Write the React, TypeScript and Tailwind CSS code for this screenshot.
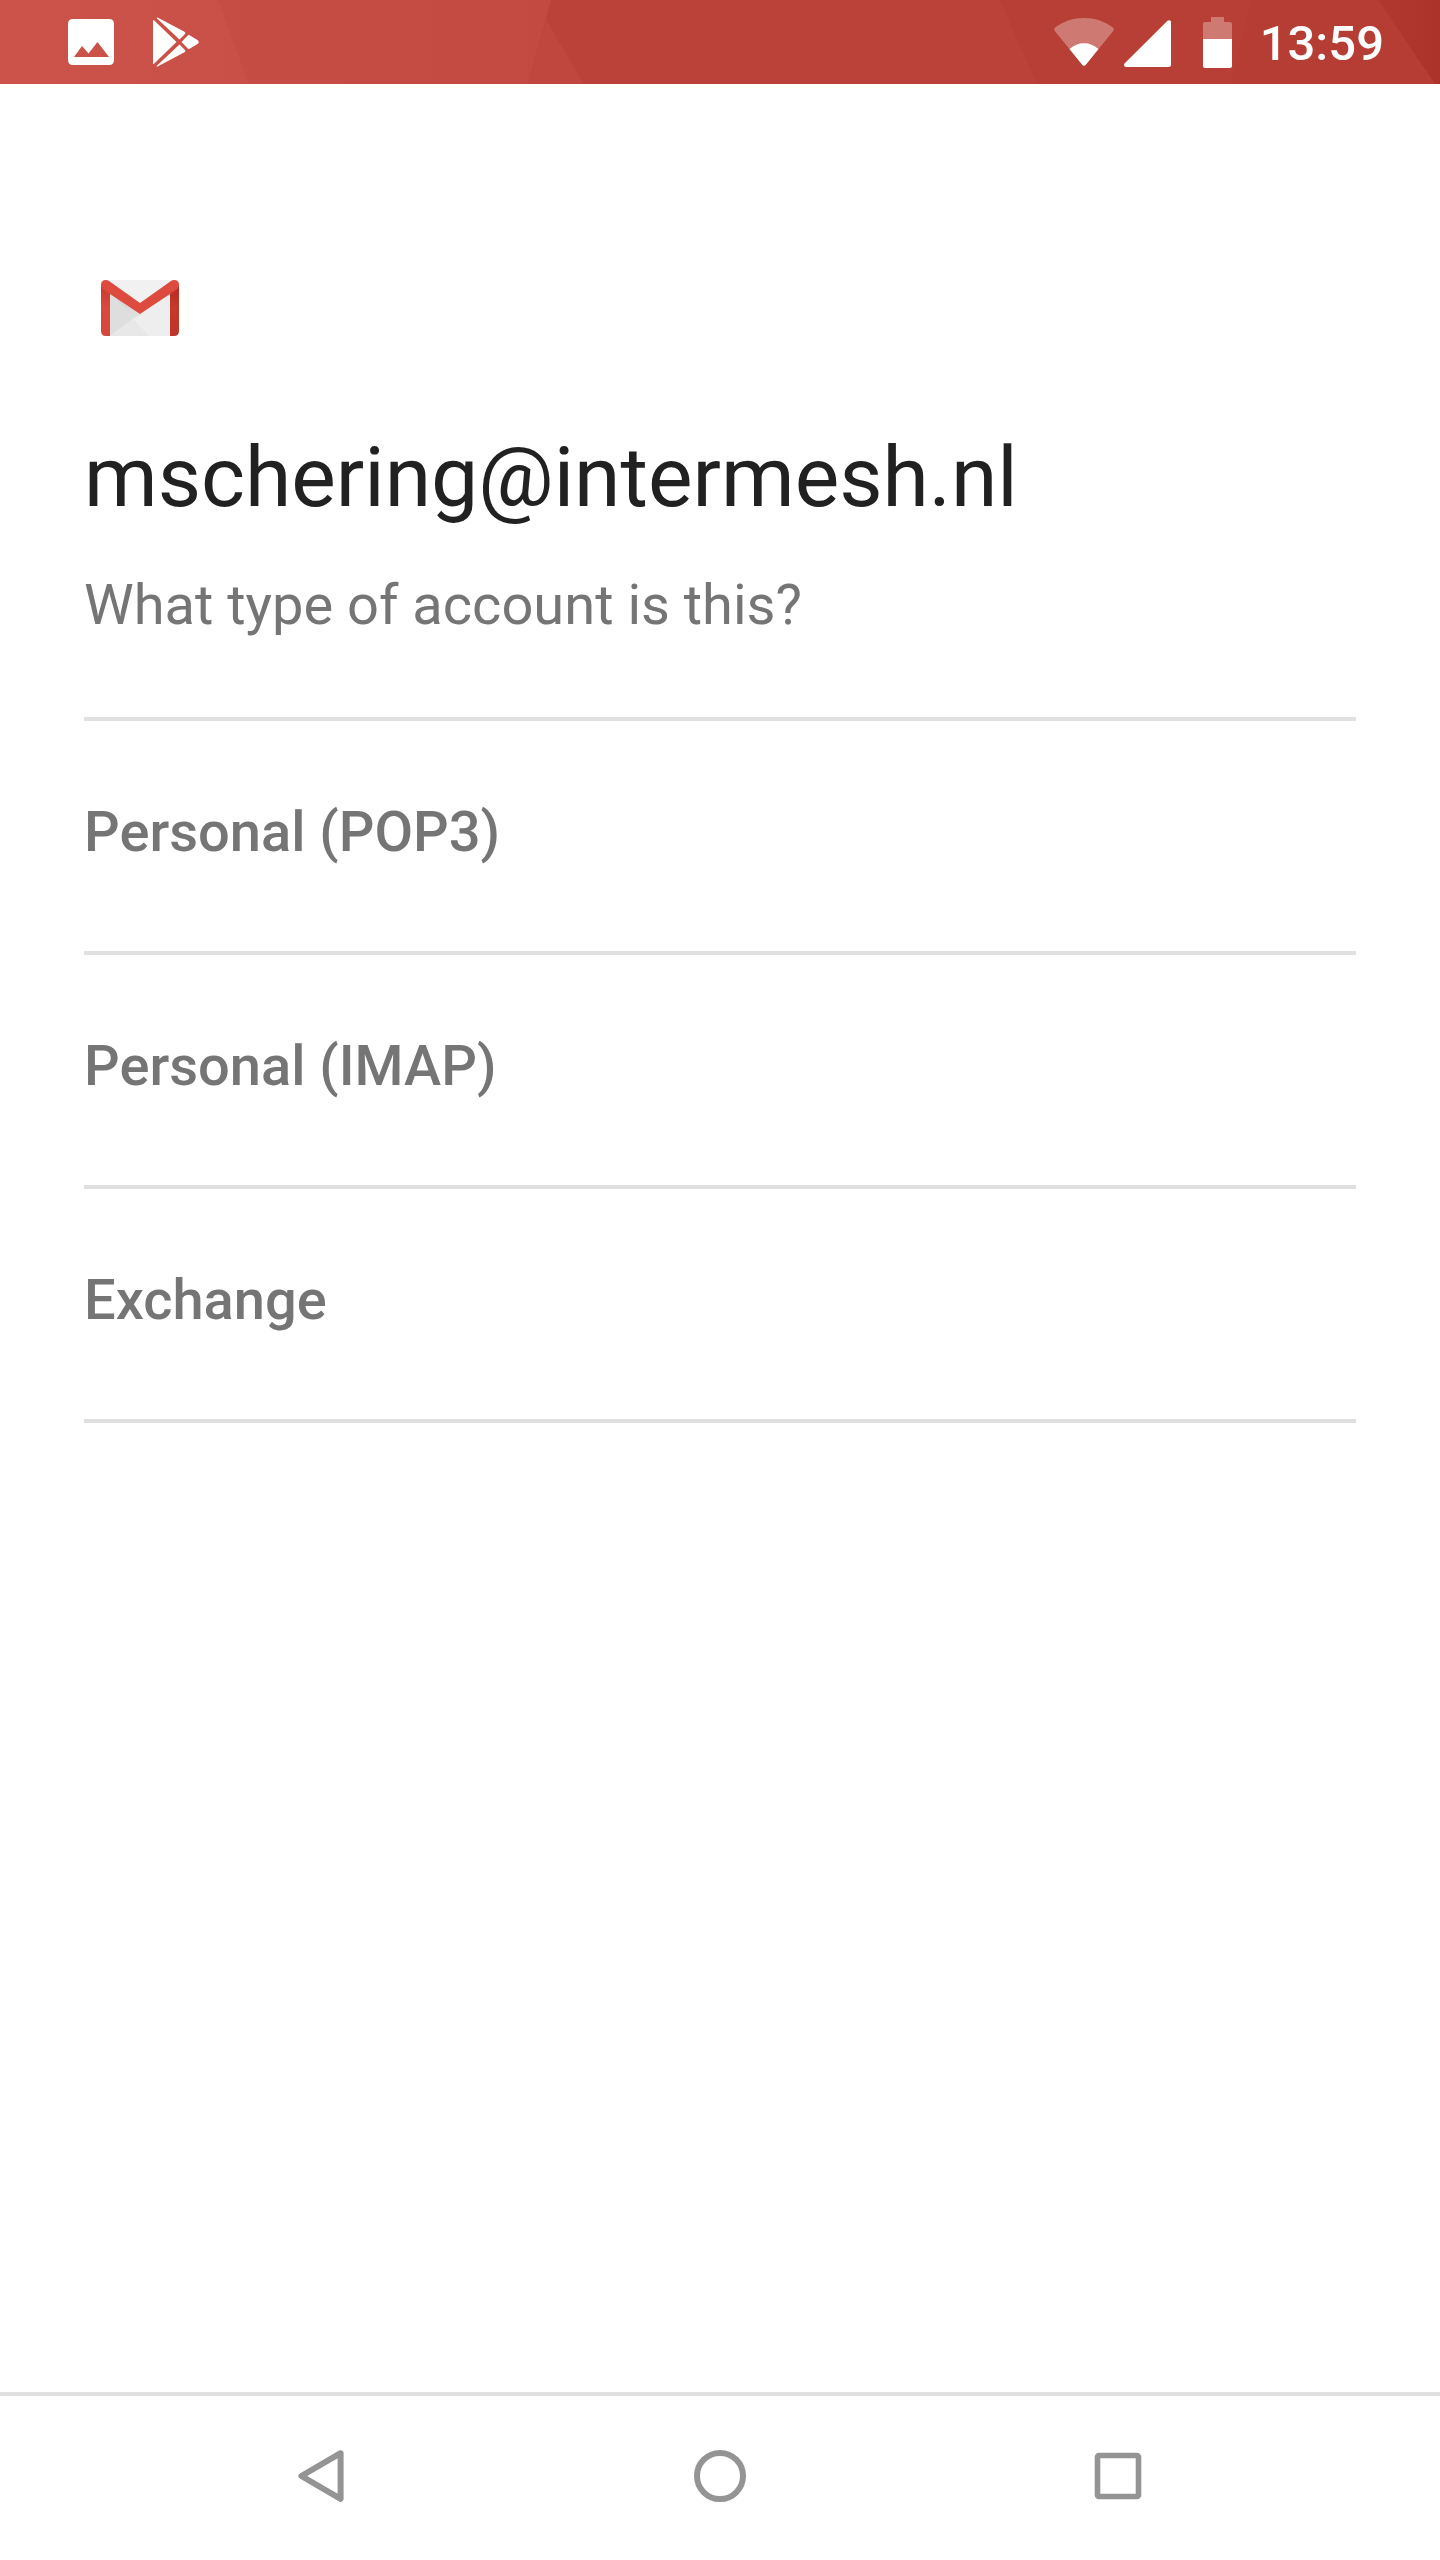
import React from "react";

const accountTypes = ["Personal (POP3)", "Personal (IMAP)", "Exchange"];

function StatusBackdrop() {
  return (
    <svg
      className="absolute inset-0 h-full w-full"
      viewBox="0 0 1440 84"
      preserveAspectRatio="none"
      aria-hidden="true"
    >
      <defs>
        <linearGradient id="barLeft" x1="0" x2="1">
          <stop offset="0" stopColor="#cb5349" />
          <stop offset="1" stopColor="#c85046" />
        </linearGradient>
        <linearGradient id="barMid" x1="0" x2="1">
          <stop offset="0" stopColor="#c54d43" />
          <stop offset="1" stopColor="#c34a40" />
        </linearGradient>
        <linearGradient id="barEdge" x1="0" x2="1">
          <stop offset="0" stopColor="#b1382e" />
          <stop offset="1" stopColor="#ab3329" />
        </linearGradient>
      </defs>
      <rect width="1440" height="84" fill="#bb4238" />
      <path d="M0 0H219L249 84H0Z" fill="url(#barLeft)" />
      <path d="M219 0H551L528 84H249Z" fill="url(#barMid)" />
      <path d="M546 20L584 84H528Z" fill="#c0473d" />
      <path d="M1000 0H1251L1230 84H1037Z" fill="#b83f35" />
      <path d="M1251 0H1378L1435 84H1230Z" fill="#b63d33" />
      <path d="M1378 0H1440V84H1435Z" fill="url(#barEdge)" />
    </svg>
  );
}

function PictureIcon() {
  return (
    <svg width="46" height="46" viewBox="0 0 46 46" role="img" aria-label="Screenshot saved">
      <path
        fill="#fff"
        fillRule="evenodd"
        d="M5 0H41Q46 0 46 5V41Q46 46 41 46H5Q0 46 0 41V5Q0 0 5 0ZM6 38H41L29.5 23L20.5 34.500L14 27Z"
      />
    </svg>
  );
}

function PlayStoreIcon() {
  return (
    <svg width="46" height="50" viewBox="0 0 46 50" role="img" aria-label="Play Store">
      <g fill="#fff">
        <path d="M0 3.500Q0 2.500 1 3.300L23.500 25L1 46.700Q0 47.500 0 46.500Z" />
        <path d="M3.500 1Q4 0 5.500 1L31.500 14.800Q33 16 32 17L26.500 22.500Z" />
        <path d="M3.500 49Q4 50 5.500 49L31.500 35.200Q33 34 32 33L26.500 27.500Z" />
        <path d="M34.500 18.700Q35.500 17.500 37 18.500L44.500 23Q47 25 44.500 27L37 31.500Q35.500 32.500 34.500 31.300L28.500 25Z" />
      </g>
    </svg>
  );
}

function WifiIcon() {
  return (
    <svg width="60" height="48" viewBox="0 0 60 48" role="img" aria-label="Wi-Fi">
      <path
        d="M1.200 9.500C10 3 19 0 30 0S50 3 58.800 9.500Q60.500 11 59.200 13L32 46.500Q30 49 28 46.500L0.800 13Q-.5 11 1.200 9.500Z"
        fill="#fff"
        fillOpacity=".31"
      />
      <path d="M15.500 31C20 27 24.500 25.200 30 25.200S40 27 44.500 31L32 46.500Q30 49 28 46.500Z" fill="#fff" />
    </svg>
  );
}

function SignalIcon() {
  return (
    <svg width="47" height="47" viewBox="0 0 47 47" role="img" aria-label="Mobile signal">
      <path d="M43.500 .8Q45 -.4 46.500 .7Q47 1.200 47 2V44.500Q47 47 44.500 47H2Q0 47 0 44.800Q0 43.800 1 43Z" fill="#fff" />
    </svg>
  );
}

function BatteryIcon() {
  return (
    <svg width="29" height="51" viewBox="0 0 29 51" role="img" aria-label="Battery">
      <path d="M8 0H21V5H27Q29 5 29 7V22H0V7Q0 5 2 5H8Z" fill="#fff" fillOpacity=".31" />
      <path d="M0 22H29V49Q29 51 27 51H2Q0 51 0 49Z" fill="#fff" />
    </svg>
  );
}

function MailLogo() {
  return (
    <svg width="78" height="56" viewBox="0 0 78 56" role="img" aria-label="Gmail">
      <defs>
        <linearGradient id="sideLeft" x1="0" y1="0" x2="0" y2="1">
          <stop offset="0" stopColor="#c9392d" />
          <stop offset=".45" stopColor="#d94a3e" />
          <stop offset="1" stopColor="#d5463a" />
        </linearGradient>
        <linearGradient id="sideRight" x1="0" y1="0" x2="0" y2="1">
          <stop offset="0" stopColor="#b5291f" />
          <stop offset=".45" stopColor="#c6392c" />
          <stop offset="1" stopColor="#be3428" />
        </linearGradient>
        <linearGradient id="foldShade" x1="0" y1="0" x2="1" y2="1">
          <stop offset="0" stopColor="#d2d2d2" />
          <stop offset="1" stopColor="#e2e2e2" />
        </linearGradient>
      </defs>
      <path d="M5 0H73V56H5Z" fill="#eeeeee" />
      <path d="M9 12L32 38.500L9 56Z" fill="#dedede" />
      <path d="M9 12L39 34L43 33L32 38.500Z" fill="url(#foldShade)" />
      <path d="M32 38.500L48 56H9Z" fill="#e8e8e8" />
      <path d="M5 0H73L39 23Z" fill="#f1f1f1" />
      <path d="M0 5L9 12V56H5Q0 56 0 51Z" fill="url(#sideLeft)" />
      <path d="M78 5L69 12V56H73Q78 56 78 51Z" fill="url(#sideRight)" />
      <path d="M5 0Q6.500 0 8 1L39 23L70 1Q71.500 0 73 0Q78 0 78 5Q78 8 75 10L39 34L3 10Q0 8 0 5Q0 0 5 0Z" fill="#dd4b3e" />
    </svg>
  );
}

function BackIcon() {
  return (
    <svg width="52" height="52" viewBox="0 0 52 52" aria-hidden="true">
      <path
        d="M44.600 3.200L5.400 26L44.600 48.800Z"
        fill="none"
        stroke="#949494"
        strokeWidth="6"
        strokeLinejoin="round"
      />
    </svg>
  );
}

function HomeIcon() {
  return (
    <svg width="52" height="52" viewBox="0 0 52 52" aria-hidden="true">
      <circle cx="26" cy="26" r="23" fill="none" stroke="#949494" strokeWidth="6" />
    </svg>
  );
}

function RecentsIcon() {
  return (
    <svg width="52" height="52" viewBox="0 0 52 52" aria-hidden="true">
      <rect x="5.500" y="5.500" width="41" height="41" rx="1.500" fill="none" stroke="#949494" strokeWidth="5.600" />
    </svg>
  );
}

export default function App() {
  return (
    <div className="flex min-h-screen flex-col bg-white font-[Roboto,sans-serif]">
      <header className="relative h-[84px]">
        <StatusBackdrop />
        <div className="relative flex h-full items-center justify-between pr-[56px] pl-[68px]">
          <div className="flex items-center gap-[39px]">
            <PictureIcon />
            <PlayStoreIcon />
          </div>
          <div className="flex items-center">
            <WifiIcon />
            <div className="ml-[10px] pt-[3px]">
              <SignalIcon />
            </div>
            <div className="ml-8">
              <BatteryIcon />
            </div>
            <time className="ml-7 pt-1 text-[49px] leading-[58px] font-medium text-white">13:59</time>
          </div>
        </div>
      </header>

      <main className="flex-1 px-[84px] pt-[196px]">
        <div className="px-[17px]">
          <MailLogo />
        </div>
        <h1 className="mt-[93px] text-[84px] leading-[98px] text-[#212121]">mschering@intermesh.nl</h1>
        <p className="mt-[45px] text-[56px] leading-[66px] text-[#757575]">What type of account is this?</p>
        <ul className="mt-[79px] border-t-4 border-[#e0e0e0]">
          {accountTypes.map((label) => (
            <li key={label} className="border-b-4 border-[#e0e0e0]">
              <button
                type="button"
                className="block w-full pt-[78px] pb-[86px] text-left text-[56px] leading-[66px] font-medium text-[#757575]"
              >
                {label}
              </button>
            </li>
          ))}
        </ul>
      </main>

      <nav
        aria-label="System navigation"
        className="grid h-[168px] grid-cols-3 border-t-4 border-[#e0e0e0] px-[123px] pb-1"
      >
        <button type="button" aria-label="Back" className="flex items-center justify-center">
          <BackIcon />
        </button>
        <button type="button" aria-label="Home" className="flex items-center justify-center">
          <HomeIcon />
        </button>
        <button type="button" aria-label="Recent apps" className="flex items-center justify-center">
          <RecentsIcon />
        </button>
      </nav>
    </div>
  );
}
